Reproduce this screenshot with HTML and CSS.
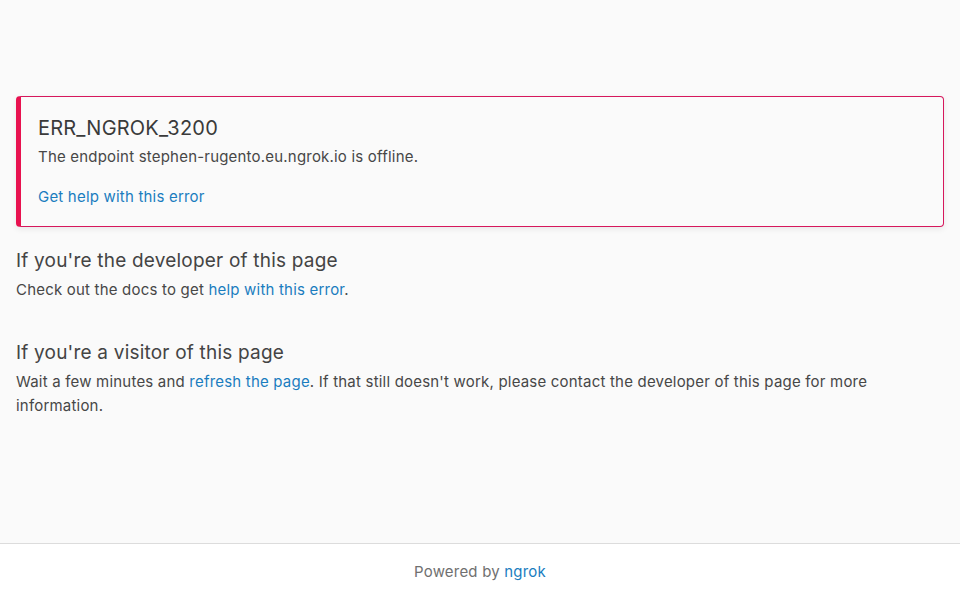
FILE: index.html
```html
<!DOCTYPE html>
<html>
<head>
  <title>ERR_NGROK_3200</title>
  <link rel="stylesheet" href="styles.css">
</head>
<body>
  <main class="content">
    <div class="error-card">
      <h1 class="error-code">ERR_NGROK_3200</h1>
      <p class="error-msg">The endpoint stephen-rugento.eu.ngrok.io is offline.</p>
      <a class="link" href="#">Get help with this error</a>
    </div>

    <section class="block">
      <h2>If you're the developer of this page</h2>
      <p>Check out the docs to get <a class="link" href="#">help with this error</a>.</p>
    </section>

    <section class="block">
      <h2>If you're a visitor of this page</h2>
      <p>Wait a few minutes and <a class="link" href="#">refresh the page</a>. If that still doesn't work, please contact the developer of this page for more information.</p>
    </section>
  </main>

  <footer class="footer">
    <p>Powered by <a class="link" href="#">ngrok</a></p>
  </footer>
</body>
</html>
```

FILE: styles.css
```css
html, body {
  margin: 0;
  height: 100%;
}
body {
  display: flex;
  flex-direction: column;
  font-family: Inter, "Open Sans", sans-serif;
  font-size: 15px;
  letter-spacing: 0.2px;
  color: #474747;
  background-color: #fafafa;
}
.content {
  flex: 1;
  padding: 96px 16px 0;
}
.link {
  color: #1a7dbf;
  text-decoration: none;
}
.error-card {
  border: 1px solid #d6175c;
  border-left: 5px solid #e8114f;
  border-radius: 4px;
  padding: 18px 16px 17px 17px;
  box-shadow: 0 2px 6px rgba(0,0,0,0.08);
}
.error-code {
  margin: 0;
  font-size: 20px;
  font-weight: 400;
  line-height: 26px;
  color: #3a3a3a;
}
.error-msg {
  margin: 4px 0 16px;
  line-height: 24px;
}
.error-card .link {
  display: block;
  line-height: 24px;
}
.block {
  margin-top: 21px;
  margin-bottom: 38px;
}
.block h2 {
  margin: 0 0 4px;
  font-size: 19px;
  font-weight: 400;
  line-height: 26px;
  color: #444;
}
.block p {
  margin: 0;
  line-height: 24px;
}
.footer {
  height: 56px;
  border-top: 1px solid #dcdcdc;
  background: #fff;
  text-align: center;
  color: #707070;
}
.footer p {
  margin: 0;
  line-height: 56px;
}
```
